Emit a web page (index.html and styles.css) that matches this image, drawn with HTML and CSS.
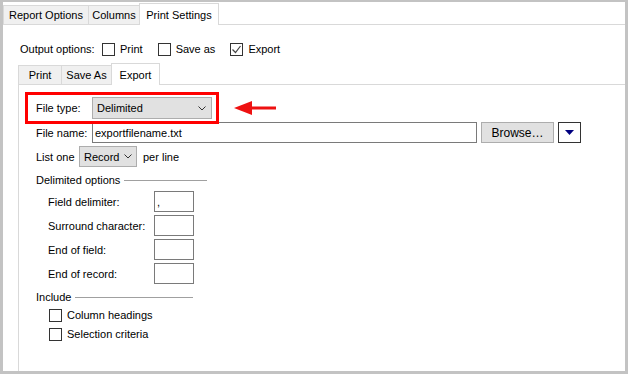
FILE: index.html
```html
<!DOCTYPE html>
<html>
<head>
    <meta charset="UTF-8">
    <title>Print Settings</title>
    <link rel="stylesheet" href="styles.css">
</head>
<body>
    <div class="window">
        <div class="tabs outer-tabs">
            <div class="tab tab-report">Report Options</div>
            <div class="tab tab-columns">Columns</div>
            <div class="tab tab-print-settings active">Print Settings</div>
            <div class="tab-fill"></div>
        </div>

        <div class="outer-panel">
            <div class="output-row">
                <span class="output-label">Output options:</span>
                <label class="check">
                    <span class="box"></span>
                    Print
                </label>
                <label class="check spaced">
                    <span class="box"></span>
                    Save as
                </label>
                <label class="check spaced">
                    <span class="box">
                        <svg class="tick" viewBox="0 0 11 11" fill="none" stroke="#444" stroke-width="1.2">
                            <polyline points="1.5,5.5 4.5,8.5 9.5,2"></polyline>
                        </svg>
                    </span>
                    Export
                </label>
            </div>

            <div class="tabs inner-tabs">
                <div class="tab tab-print">Print</div>
                <div class="tab tab-saveas">Save As</div>
                <div class="tab tab-export active">Export</div>
                <div class="tab-fill"></div>
            </div>

            <div class="inner-panel">
                <div class="row row-filetype">
                    <span class="label label-wide">File type:</span>
                    <div class="select select-filetype">
                        <span>Delimited</span>
                        <svg class="chevron" viewBox="0 0 8 5" fill="none" stroke="#333" stroke-width="1">
                            <polyline points="0.5,0.5 4,4 7.5,0.5"></polyline>
                        </svg>
                    </div>
                </div>

                <div class="row row-gap">
                    <span class="label label-wide">File name:</span>
                    <div class="text-input filename">exportfilename.txt</div>
                    <button class="button browse">Browse…</button>
                    <button class="menu-button">
                        <svg viewBox="0 0 9 5" fill="#000080">
                            <polygon points="0,0 9,0 4.5,5"></polygon>
                        </svg>
                    </button>
                </div>

                <div class="row row-gap">
                    <span class="label label-listone">List one</span>
                    <div class="select select-record">
                        <span>Record</span>
                        <svg class="chevron" viewBox="0 0 8 5" fill="none" stroke="#333" stroke-width="1">
                            <polyline points="0.5,0.5 4,4 7.5,0.5"></polyline>
                        </svg>
                    </div>
                    <span class="per-line">per line</span>
                </div>

                <div class="group-title">
                    <span>Delimited options</span>
                    <span class="rule rule-delimited"></span>
                </div>

                <div class="field-row first">
                    <span class="field-label">Field delimiter:</span>
                    <div class="text-input small">,</div>
                </div>
                <div class="field-row">
                    <span class="field-label">Surround character:</span>
                    <div class="text-input small"></div>
                </div>
                <div class="field-row">
                    <span class="field-label">End of field:</span>
                    <div class="text-input small"></div>
                </div>
                <div class="field-row">
                    <span class="field-label">End of record:</span>
                    <div class="text-input small"></div>
                </div>

                <div class="group-title include">
                    <span>Include</span>
                    <span class="rule rule-include"></span>
                </div>

                <label class="check check-row first">
                    <span class="box"></span>
                    Column headings
                </label>
                <label class="check check-row">
                    <span class="box"></span>
                    Selection criteria
                </label>

                <div class="highlight"></div>
                <svg class="callout-arrow" viewBox="0 0 42 16" fill="#ee1111">
                    <polygon points="0,8 18,1 18,15"></polygon>
                    <rect x="17" y="6.5" width="25" height="3"></rect>
                </svg>
            </div>
        </div>
    </div>
</body>
</html>
```

FILE: styles.css
```css
body {
    margin: 0;
    font-family: "Liberation Sans", Arial, sans-serif;
    font-size: 11px;
    color: #000;
    background-color: #fff;
}

.window {
    width: 628px;
    height: 374px;
    box-sizing: border-box;
    border: 3px solid #c3c3c3;
    border-top-width: 2px;
    display: flex;
    flex-direction: column;
    background-color: #fff;
}

/* tab strips */
.tabs {
    display: flex;
    align-items: flex-end;
}

.outer-tabs {
    height: 23px;
}

.inner-tabs {
    height: 22px;
    margin-top: 7px;
}

.tab {
    box-sizing: border-box;
    height: 20px;
    margin-right: -1px;
    border: 1px solid #d9d9d9;
    background-color: #f0f0f0;
    display: flex;
    align-items: center;
    justify-content: center;
    white-space: nowrap;
}

.tab.active {
    height: 22px;
    border-bottom: none;
    background-color: #fff;
    position: relative;
    z-index: 1;
}

.tab-fill {
    flex: 1;
    border-bottom: 1px solid #d9d9d9;
}

.tab-report { width: 86px; }
.tab-columns { width: 52px; }
.tab-print-settings { width: 80px; }
.tab-print { width: 44px; }
.tab-saveas { width: 51px; }
.tab-export { width: 49px; }

/* panels */
.outer-panel {
    flex: 1;
    display: flex;
    flex-direction: column;
    padding: 17px 0 0 15px;
}

.output-row {
    display: flex;
    align-items: center;
    height: 14px;
    padding-left: 2px;
}

.output-label {
    width: 82px;
}

.inner-panel {
    flex: 1;
    position: relative;
    display: flex;
    flex-direction: column;
    border-left: 1px solid #d9d9d9;
    padding: 12px 0 0 17px;
}

/* checkboxes */
.check {
    display: flex;
    align-items: center;
    gap: 5px;
}

.check.spaced {
    margin-left: 15px;
}

.box {
    box-sizing: border-box;
    width: 13px;
    height: 13px;
    border: 1px solid #333;
    background-color: #fff;
    display: flex;
    align-items: center;
    justify-content: center;
}

.tick {
    width: 11px;
    height: 11px;
}

.check-row {
    height: 16px;
    margin-top: 3px;
    padding-left: 13px;
}

/* form rows */
.row {
    display: flex;
    align-items: center;
    height: 21px;
}

.row-filetype {
    height: 22px;
}

.row-gap {
    margin-top: 3px;
}

.label-wide {
    width: 56px;
}

.label-listone {
    width: 43px;
}

.select {
    box-sizing: border-box;
    height: 100%;
    display: flex;
    align-items: center;
    justify-content: space-between;
    padding: 0 4px;
    border: 1px solid #adadad;
    background-color: #e1e1e1;
}

.select-filetype {
    width: 120px;
    padding-right: 5px;
}

.select-record {
    width: 58px;
}

.chevron {
    width: 8px;
    height: 5px;
}

.per-line {
    margin-left: 6px;
}

.text-input {
    box-sizing: border-box;
    height: 21px;
    padding: 0 2px;
    border: 1px solid #7a7a7a;
    background-color: #fff;
    display: flex;
    align-items: center;
}

.filename {
    width: 385px;
}

.small {
    width: 40px;
}

.button {
    box-sizing: border-box;
    width: 73px;
    height: 21px;
    margin-left: 4px;
    padding: 0;
    border: 1px solid #adadad;
    background-color: #e1e1e1;
    font-family: "Liberation Sans", Arial, sans-serif;
    font-size: 12px;
    color: #000;
}

.menu-button {
    box-sizing: border-box;
    width: 23px;
    height: 21px;
    margin-left: 4px;
    padding: 0;
    border: 1px solid #333;
    background-color: #fff;
    display: flex;
    align-items: center;
    justify-content: center;
}

.menu-button svg {
    width: 9px;
    height: 5px;
}

/* grouped fields */
.group-title {
    display: flex;
    align-items: center;
    height: 14px;
    margin-top: 6px;
}

.rule {
    height: 0;
    margin: 2px 0 0 4px;
    border-top: 1px solid #a0a0a0;
    border-bottom: 1px solid #fff;
}

.rule-delimited {
    width: 83px;
}

.rule-include {
    width: 118px;
}

.field-row {
    display: flex;
    align-items: center;
    height: 21px;
    margin-top: 3px;
    padding-left: 12px;
}

.field-row.first {
    margin-top: 4px;
}

.field-label {
    width: 106px;
}

/* annotation overlay */
.highlight {
    position: absolute;
    left: 6px;
    top: 7px;
    width: 194px;
    height: 32px;
    box-sizing: border-box;
    border: 3px solid #ff0000;
}

.callout-arrow {
    position: absolute;
    left: 215px;
    top: 15px;
    width: 42px;
    height: 16px;
}
```
